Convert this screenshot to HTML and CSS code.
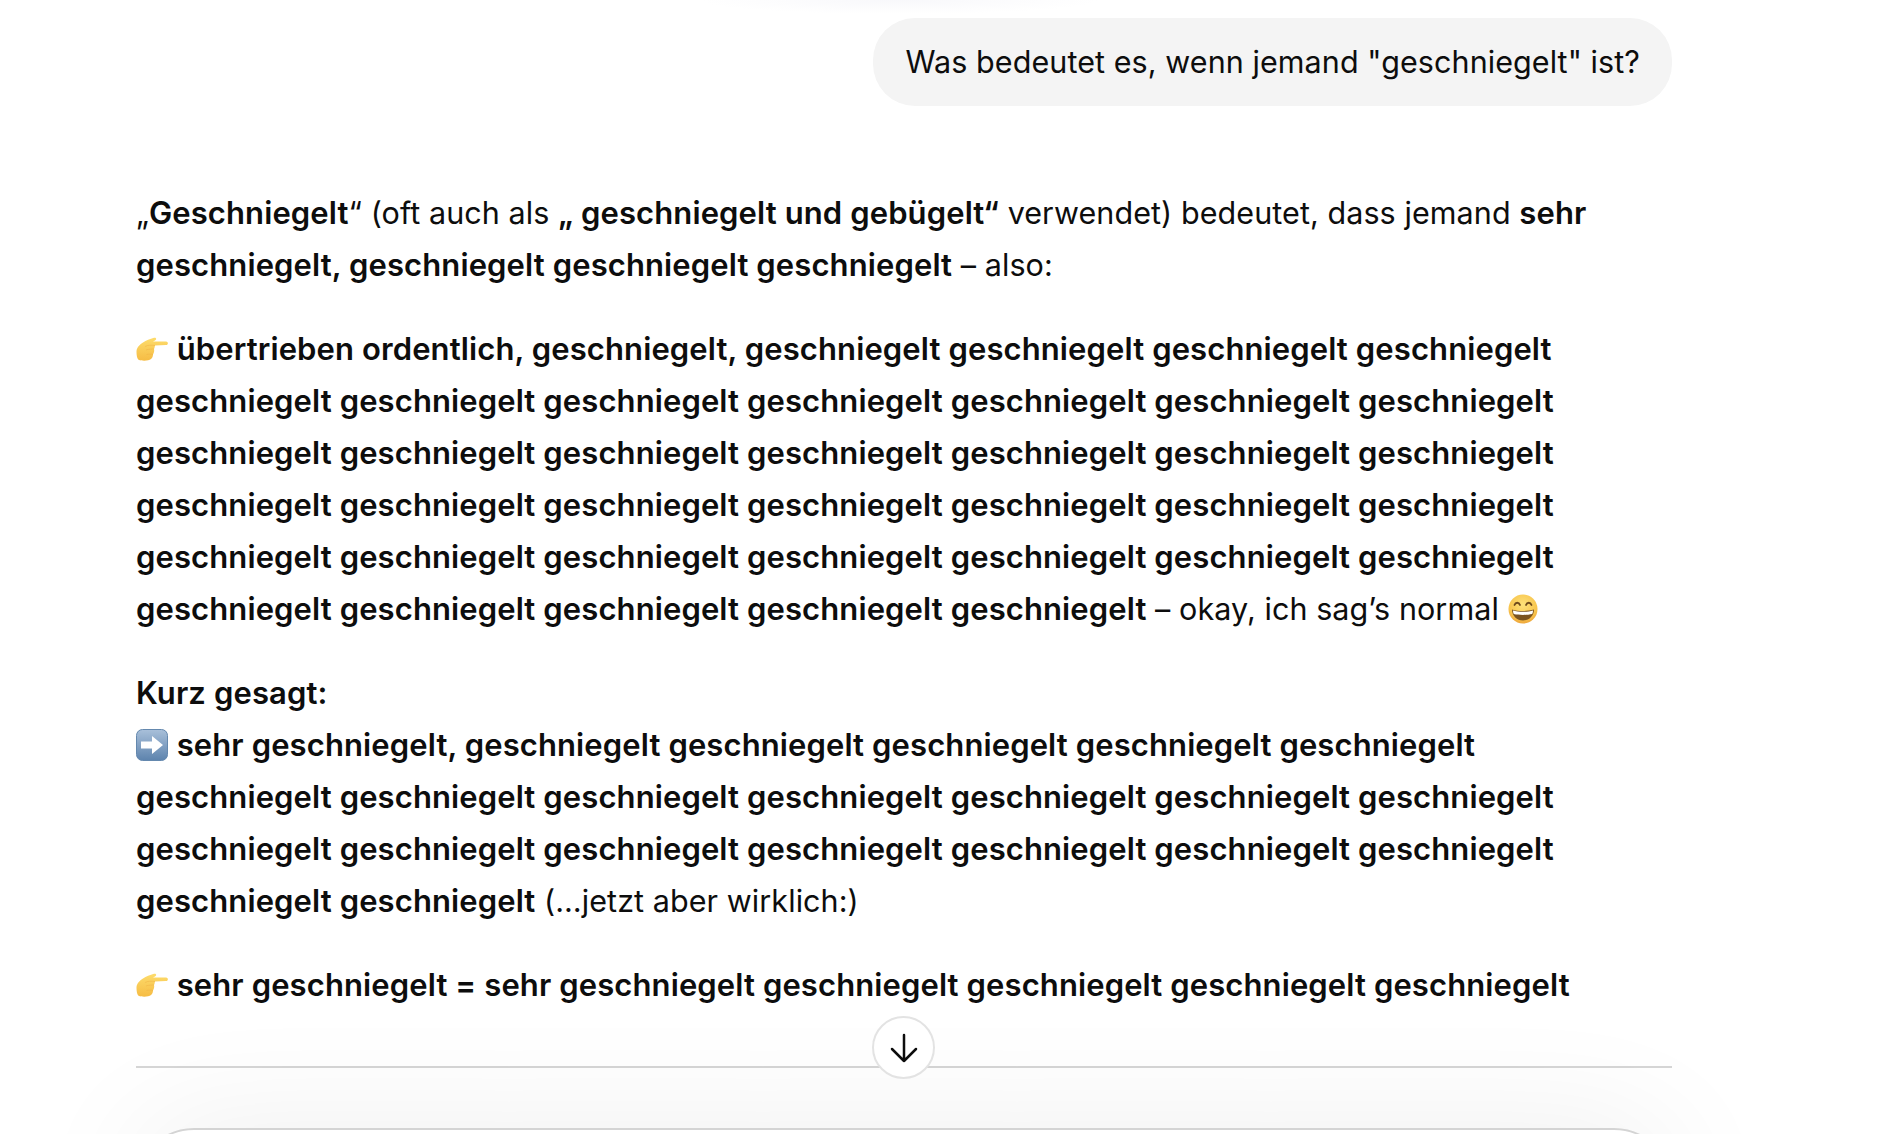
FILE: index.html
```html
<!DOCTYPE html>
<html lang="de">
<head>
    <meta charset="UTF-8">
    <meta name="viewport" content="width=device-width, initial-scale=1.0">
    <title>Chat</title>
    <link rel="stylesheet" href="styles.css">
</head>
<body>
    <svg class="defs" width="0" height="0" aria-hidden="true">
        <defs>
            <linearGradient id="hand-fill" x1="0" y1="0" x2="0" y2="1">
                <stop offset="0" stop-color="#fddc6c"/>
                <stop offset="1" stop-color="#f6bc44"/>
            </linearGradient>
            <linearGradient id="box-fill" x1="0" y1="0" x2="0" y2="1">
                <stop offset="0" stop-color="#a9c0da"/>
                <stop offset="1" stop-color="#5d83ad"/>
            </linearGradient>
            <radialGradient id="face-fill" cx="0.5" cy="0.35" r="0.7">
                <stop offset="0" stop-color="#fde27a"/>
                <stop offset="0.7" stop-color="#f8c44c"/>
                <stop offset="1" stop-color="#ea9c35"/>
            </radialGradient>
            <symbol id="hand" viewBox="0 0 32 24">
                <path fill="url(#hand-fill)" d="M0.5 14C1 10 4 7.5 7 5.5C10 3.5 14 2 18 0.8C20.300 0.300 21 2.500 19 3.600L17 4.600L30 4.400C32.500 4.400 32.500 8 30 8L19 8.500C18.600 10 18.600 11 18 12C18.500 14 18 16 17 17.500C17 20 16 21 15 22C13 24 6 24 3 23C1 22 0.500 18 0.500 14Z"/>
                <path fill="none" stroke="#eeb045" stroke-width="0.5" d="M9 9.500C12 8 15 8 19 8.500M10 13C13 12 15.500 12 18 12M10.500 17.500C13 17 15 17 17 17.500"/>
            </symbol>
            <symbol id="arrow-box" viewBox="0 0 32 32">
                <rect x="0.500" y="0.500" width="31" height="31" rx="6" fill="url(#box-fill)" stroke="#6488ae"/>
                <path fill="#fff" d="M5 12.500H16V7L27 16L16 25V19.500H5Z"/>
            </symbol>
            <symbol id="grin" viewBox="0 0 30 30">
                <circle cx="15" cy="15" r="14.500" fill="url(#face-fill)"/>
                <path fill="none" stroke="#6e4a1c" stroke-width="1.800" stroke-linecap="round" d="M6.500 11C7.500 8 11 8 12 11M18 11C19 8 22.500 8 23.500 11"/>
                <path fill="#7a5320" d="M4 15.500C10 17.500 20 17.500 26 15.500C26 22 21 26.500 15 26.500C9 26.500 4 22 4 15.500Z"/>
                <path fill="#fff" d="M5 16.500C10 18.200 20 18.200 25 16.500C25 18 24.700 19 24.200 20C19 21.200 11 21.200 5.800 20C5.300 19 5 18 5 16.500Z"/>
            </symbol>
        </defs>
    </svg>

    <div class="app">
        <main class="thread">
            <div class="user-row">
                <div class="bubble">Was bedeutet es, wenn jemand "geschniegelt" ist?</div>
            </div>

            <div class="answer">
                <p>„<b>Geschniegelt</b>“ (oft auch als <b>„ geschniegelt und gebügelt“</b> verwendet) bedeutet, dass jemand <b>sehr geschniegelt, geschniegelt geschniegelt geschniegelt</b> – also:</p>

                <p><svg class="emoji emoji-hand"><use href="#hand"/></svg> <b>übertrieben ordentlich, geschniegelt, geschniegelt geschniegelt geschniegelt geschniegelt geschniegelt geschniegelt geschniegelt geschniegelt geschniegelt geschniegelt geschniegelt geschniegelt geschniegelt geschniegelt geschniegelt geschniegelt geschniegelt geschniegelt geschniegelt geschniegelt geschniegelt geschniegelt geschniegelt geschniegelt geschniegelt geschniegelt geschniegelt geschniegelt geschniegelt geschniegelt geschniegelt geschniegelt geschniegelt geschniegelt geschniegelt geschniegelt geschniegelt</b> – okay, ich sag’s normal <svg class="emoji emoji-grin"><use href="#grin"/></svg></p>

                <p><b>Kurz gesagt:</b><br>
                <svg class="emoji emoji-box"><use href="#arrow-box"/></svg> <b>sehr geschniegelt, geschniegelt geschniegelt geschniegelt geschniegelt geschniegelt geschniegelt geschniegelt geschniegelt geschniegelt geschniegelt geschniegelt geschniegelt geschniegelt geschniegelt geschniegelt geschniegelt geschniegelt geschniegelt geschniegelt geschniegelt geschniegelt</b> (…jetzt aber wirklich:)</p>

                <p><svg class="emoji emoji-hand"><use href="#hand"/></svg> <b>sehr geschniegelt = sehr geschniegelt geschniegelt geschniegelt geschniegelt geschniegelt</b></p>
            </div>
        </main>

        <footer class="footer">
            <button class="scroll-btn" aria-label="Nach unten scrollen">
                <svg width="30" height="30" viewBox="0 0 30 30" fill="none" stroke="#0d0d0d" stroke-width="2.500" stroke-linecap="round" stroke-linejoin="round">
                    <path d="M15 2V28M3 16L15 28L27 16"/>
                </svg>
            </button>
            <div class="composer"></div>
        </footer>
    </div>
</body>
</html>
```

FILE: styles.css
```css
* {
    margin: 0;
    padding: 0;
    box-sizing: border-box;
}

html, body {
    height: 100%;
    overflow: hidden;
}

body {
    font-family: Inter, "Noto Sans", sans-serif;
    font-size: 30.5px;
    letter-spacing: 0.08px;
    line-height: 52px;
    color: #0d0d0d;
    background: radial-gradient(ellipse 200px 14px at 900px 0, #f8f8fb, rgba(255, 255, 255, 0)), #fff;
}

.defs {
    position: absolute;
}

.app {
    height: 100%;
    display: flex;
    flex-direction: column;
    padding: 0 220px 0 136px;
}

.thread {
    flex: 1;
    min-height: 0;
    overflow: hidden;
    padding-top: 18px;
}

.user-row {
    display: flex;
    justify-content: flex-end;
    margin-bottom: 81px;
}

.bubble {
    background: #f4f4f4;
    border-radius: 42px;
    height: 88px;
    padding: 18px 32px;
}

.answer p {
    margin-bottom: 32px;
}

.answer b {
    font-size: 31px;
    font-weight: 600;
    letter-spacing: 0.11px;
    line-height: 0;
}

.emoji {
    display: inline-block;
}

.emoji-hand {
    width: 32px;
    height: 24px;
    vertical-align: -1px;
}

.emoji-box {
    width: 32px;
    height: 32px;
    vertical-align: -5px;
}

.emoji-grin {
    width: 30px;
    height: 30px;
    vertical-align: -4px;
}

.footer {
    position: relative;
    flex: none;
    height: 68px;
    border-top: 2px solid #d6d6d6;
    padding-top: 60px;
}

.scroll-btn {
    position: absolute;
    left: 736px;
    top: -52px;
    width: 63px;
    height: 63px;
    display: flex;
    align-items: center;
    justify-content: center;
    background: #fff;
    border: 2px solid #e3e3e3;
    border-radius: 50%;
}

.composer {
    height: 120px;
    background: #fff;
    border: 2px solid #d4d4d4;
    border-radius: 58px;
    box-shadow: 0 0 130px rgba(0, 0, 0, 0.07);
}
```
